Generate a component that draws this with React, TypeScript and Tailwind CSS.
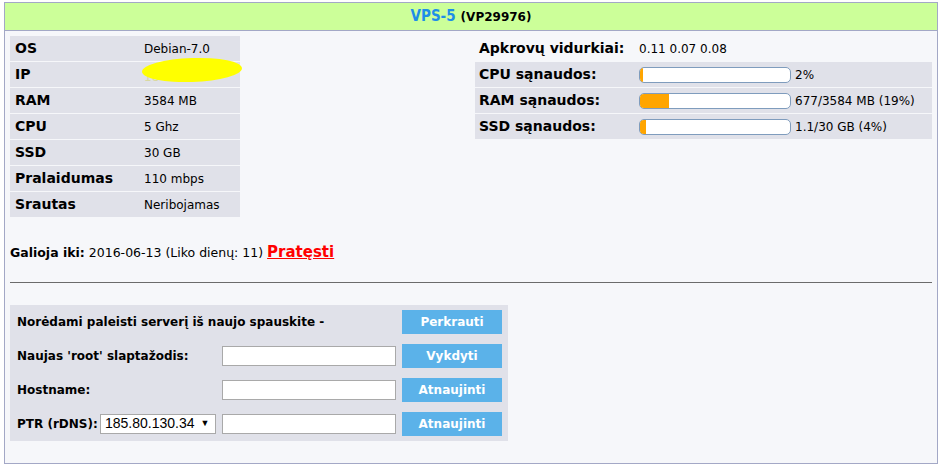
const specs = [
  { label: "OS", value: "Debian-7.0" },
  { label: "IP", value: "185.80.130.34", hidden: true },
  { label: "RAM", value: "3584 MB" },
  { label: "CPU", value: "5 Ghz" },
  { label: "SSD", value: "30 GB" },
  { label: "Pralaidumas", value: "110 mbps" },
  { label: "Srautas", value: "Neribojamas" },
];

const usage = [
  { label: "CPU sąnaudos:", percent: 2, text: "2%" },
  { label: "RAM sąnaudos:", percent: 19, text: "677/3584 MB (19%)" },
  { label: "SSD sąnaudos:", percent: 4, text: "1.1/30 GB (4%)" },
];

const verdana = "font-['DejaVu_Sans',Verdana,sans-serif]";
const condensed = "font-['DejaVu_Sans_Condensed','DejaVu_Sans',Tahoma,sans-serif]";

const Bar = ({ percent }: { percent: number }) => (
  <div className="h-[16px] w-[152px] overflow-hidden rounded-[5px] border border-[#7f9cbd] bg-white">
    <div className="h-full bg-[#ffa500]" style={{ width: `${Math.max(percent, 2)}%` }} />
  </div>
);

const ActionButton = ({ label }: { label: string }) => (
  <button
    className={`h-[24px] w-[100px] bg-[#5bb2e9] text-[12px] font-bold text-white ${verdana}`}>
    {label}
  </button>
);

const TextInput = () => (
  <input className="h-[20px] w-[174px] border border-[#a9a9a9] bg-white" />
);

export default function App() {
  return (
    <div className="min-h-[475px] bg-white pl-[4px] pt-[2px]">
      <div className="flex h-[462px] w-[934px] flex-col border border-[#a3a8c6] bg-[#f6f7fa]">
        <div className="flex h-[28px] items-center justify-center border-b border-[#a3a8c6] bg-[#ccff99]">
          <span className={`text-[15px] font-bold text-[#1e8ee8] ${condensed}`}>VPS-5</span>
          <span className={`ml-[5px] text-[12px] font-bold text-black ${verdana}`}>(VP29976)</span>
        </div>

        <div className="flex flex-col px-[5px] pt-[5px]">
          <div className="flex justify-between">
            <div className="flex w-[230px] flex-col gap-[1px]">
              {specs.map((row) => (
                <div key={row.label} className="flex h-[25px] items-center bg-[#e0e1e9]">
                  <span className={`w-[134px] pl-[5px] text-[14px] font-bold text-black ${verdana}`}>
                    {row.label}
                  </span>
                  {row.hidden ? (
                    <span className="relative">
                      <span className={`text-[12px] text-[#d8d8a0] ${verdana}`}>18</span>
                      <span className="absolute left-[-2px] top-[-5px] h-[24px] w-[100px] rotate-[-2deg] rounded-[50%] bg-[#ffff00]" />
                    </span>
                  ) : (
                    <span className={`text-[12px] text-black ${verdana}`}>{row.value}</span>
                  )}
                </div>
              ))}
            </div>

            <div className="flex w-[457px] flex-col gap-[1px]">
              <div className="flex h-[25px] items-center">
                <span className={`w-[164px] pl-[4px] text-[14px] font-bold text-black ${verdana}`}>
                  Apkrovų vidurkiai:
                </span>
                <span className={`text-[12px] text-black ${verdana}`}>0.11 0.07 0.08</span>
              </div>
              {usage.map((row) => (
                <div key={row.label} className="flex h-[25px] items-center bg-[#e0e1e9]">
                  <span className={`w-[164px] pl-[4px] text-[14px] font-bold text-black ${verdana}`}>
                    {row.label}
                  </span>
                  <Bar percent={row.percent} />
                  <span className={`ml-[4px] text-[12px] text-black ${verdana}`}>{row.text}</span>
                </div>
              ))}
            </div>
          </div>

          <div className={`mt-[24px] flex items-baseline gap-[4px] text-[12.5px] text-black ${verdana}`}>
            <span className="font-bold">Galioja iki:</span>
            <span>2016-06-13 (Liko dienų: 11)</span>
            <span className="text-[15px] font-bold text-[#ff0000] underline">Pratęsti</span>
          </div>

          <hr className="mt-[18px] border-t border-[#6b6b6b]" />

          <div className="mt-[22px] flex w-[498px] flex-col gap-[10px] bg-[#e0e1e9] py-[5px] pl-[7px]">
            <div className="flex items-center">
              <span className={`w-[385px] text-[12px] font-bold text-black ${verdana}`}>
                Norėdami paleisti serverį iš naujo spauskite -
              </span>
              <ActionButton label="Perkrauti" />
            </div>
            <div className="flex items-center">
              <span className={`w-[205px] text-[12px] font-bold text-black ${verdana}`}>
                Naujas 'root' slaptažodis:
              </span>
              <TextInput />
              <span className="w-[6px]" />
              <ActionButton label="Vykdyti" />
            </div>
            <div className="flex items-center">
              <span className={`w-[205px] text-[12px] font-bold text-black ${verdana}`}>Hostname:</span>
              <TextInput />
              <span className="w-[6px]" />
              <ActionButton label="Atnaujinti" />
            </div>
            <div className="flex items-center">
              <span className={`w-[83px] text-[12px] font-bold text-black ${verdana}`}>PTR (rDNS):</span>
              <div className="flex h-[20px] w-[116px] items-center gap-[6px] border border-[#a9a9a9] bg-white px-[4px] font-['Liberation_Sans',Arial,sans-serif] text-[14px] text-black">
                <span>185.80.130.34</span>
                <span className="text-[9px]">▼</span>
              </div>
              <span className="w-[6px]" />
              <TextInput />
              <span className="w-[6px]" />
              <ActionButton label="Atnaujinti" />
            </div>
          </div>
        </div>
      </div>
    </div>
  );
}
